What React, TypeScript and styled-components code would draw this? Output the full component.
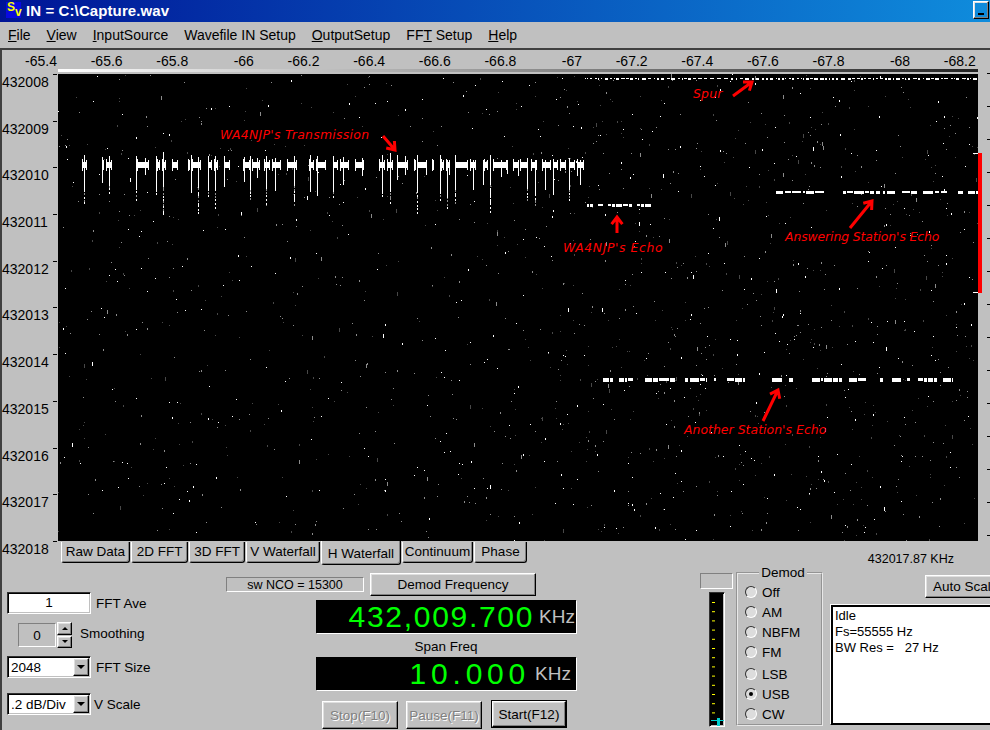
import React from 'react'
import styled, { createGlobalStyle, css } from 'styled-components'

const GlobalStyles = createGlobalStyle`
  html, body {
    margin: 0;
    background: #c0c0c0;
    overflow: hidden;
  }
  * { box-sizing: border-box; }
`

const raised = css`
  border: 1px solid;
  border-color: #fff #000 #000 #fff;
  box-shadow: inset -1px -1px #808080, inset 1px 1px #dfdfdf;
`

const sunken = css`
  border: 1px solid;
  border-color: #303030 #fff #fff #303030;
  box-shadow: inset 1px 1px #000, inset -1px -1px #c0c0c0;
`

const PLOT_W = 920
const PLOT_H = 467

// small seeded generator so the waterfall comes out the same on every load
const makeRandom = (seed: number) => () => {
  seed = (seed + 0x6d2b79f5) | 0
  let t = Math.imul(seed ^ (seed >>> 15), 1 | seed)
  t = (t + Math.imul(t ^ (t >>> 7), 61 | t)) ^ t
  return ((t ^ (t >>> 14)) >>> 0) / 4294967296
}

const buildNoise = () => {
  const rnd = makeRandom(7)
  const paths = ['', '', '']
  for (let i = 0; i < 1900; i++) {
    const x = Math.floor(rnd() * PLOT_W)
    if (x < 500 && rnd() < 0.35) continue
    const y = Math.floor(rnd() * PLOT_H)
    const len = rnd() < 0.75 ? 1 : rnd() < 0.7 ? 2 : 4
    const level = rnd()
    const slot = level < 0.25 ? 0 : level < 0.6 ? 1 : 2
    paths[slot] += `M${x}.5 ${y}v${len}`
  }
  return paths
}

// plot x ranges in page pixels, main transmission keying
const KEY_BLOBS = [
  [82, 87], [102, 104], [106, 112], [137, 149], [157, 160], [162, 166], [172, 178], [188, 190], [192, 201],
  [208, 212], [214, 218], [224, 230], [243, 250], [252, 260], [264, 270], [272, 281], [287, 297], [309, 314],
  [316, 326], [333, 338], [340, 349], [355, 364], [379, 385], [387, 393], [397, 408], [414, 416], [417, 427],
  [432, 434], [441, 444], [446, 450], [455, 468], [470, 476], [484, 488], [493, 507], [513, 519], [520, 528],
  [531, 537], [542, 551], [553, 558], [560, 566], [569, 575], [577, 584],
]

const KEY_TAILS = [
  [84, 155, 205], [102, 157, 183], [109, 156, 195], [136, 156, 200], [145, 158, 175], [156, 156, 195], [163, 152, 215],
  [191, 155, 195], [198, 157, 215], [208, 156, 198], [215, 156, 210], [224, 156, 187], [244, 157, 182], [250, 156, 200],
  [257, 158, 178], [266, 156, 205], [275, 158, 190], [294, 156, 205], [310, 155, 192], [317, 156, 198], [333, 156, 200],
  [343, 157, 185], [362, 158, 176], [382, 155, 196], [390, 153, 205], [397, 155, 180], [405, 156, 175], [417, 155, 215],
  [426, 160, 175], [440, 155, 200], [447, 160, 210], [449, 160, 175], [455, 155, 205], [473, 160, 190], [483, 160, 185],
  [490, 155, 215], [501, 160, 177], [507, 160, 174], [518, 160, 176], [527, 158, 200], [535, 160, 205], [545, 160, 190],
  [553, 160, 195], [569, 158, 200], [577, 160, 176], [580, 160, 185],
]

const ECHO_TRACES = [
  { y: 204, h: 3, runs: [[587, 593], [598, 603], [608, 632], [637, 651]] },
  { y: 191, h: 3, runs: [[776, 825], [843, 880], [883, 895], [902, 917], [923, 947], [958, 963], [968, 978]] },
  { y: 378, h: 4, runs: [[603, 613], [619, 633], [645, 675], [685, 707], [714, 716], [727, 745], [772, 782], [789, 795], [812, 842], [849, 867], [880, 883], [892, 902], [907, 910], [918, 937], [943, 953]] },
  { y: 78, h: 2, runs: [[585, 978]] },
]

const buildSignals = () => {
  const rnd = makeRandom(21)
  let bright = ''
  let dim = ''
  KEY_BLOBS.forEach(([a, b]) => {
    bright += `M${a - 58} ${162 - 74}h${b - a}v6h${a - b}z`
    // keying clicks stick out past both ends of every element
    bright += `M${a - 58} ${159 - 74}h1v12h-1z`
    bright += `M${b - 59} ${160 - 74}h1v10h-1z`
  })
  KEY_TAILS.forEach(([x, top, end]) => {
    const px = x - 58
    const solid = Math.min(end, top + 30 + Math.floor(rnd() * 9))
    bright += `M${px} ${top - 74}h1v${solid - top}h-1z`
    for (let y = solid; y < end; y += 2 + Math.floor(rnd() * 3)) {
      const piece = `M${px} ${y - 74}h1v2h-1z`
      if (rnd() < 0.7) bright += piece
      else dim += piece
    }
  })
  ECHO_TRACES.forEach(({ y, h, runs }) => {
    const thin = h === 2
    runs.forEach(([a, b]) => {
      let x = a
      while (x < b) {
        const w = Math.min(b - x, thin ? 1 + Math.floor(rnd() * 4) : 2 + Math.floor(rnd() * 9))
        const tall = thin ? 1 + Math.floor(rnd() * 2) : h - (rnd() < 0.3 ? 1 : 0)
        bright += `M${x - 58} ${y - 74}h${w}v${tall}h${-w}z`
        x += w + (thin ? 1 + Math.floor(rnd() * 3) : rnd() < 0.7 ? 1 : 2)
      }
    })
  })
  return { bright, dim }
}

const NOISE = buildNoise()
const SIGNALS = buildSignals()

const Window = styled.div`
  width: 990px;
  height: 730px;
  overflow: hidden;
  background: #c0c0c0;
  color: #000;
  font-family: "Liberation Sans", Arial, sans-serif;
  font-size: 14px;
  display: flex;
  flex-direction: column;
`

const TitleBar = styled.div`
  height: 22px;
  flex: none;
  display: flex;
  align-items: flex-start;
  padding: 1px 0 0 6px;
  background: linear-gradient(to right, #001496, #0f8cdc);
  overflow: hidden;
`

const AppIcon = styled.div`
  width: 15px;
  height: 16px;
  margin-top: 1px;
  flex: none;
  display: flex;
  justify-content: space-between;
  padding: 0 1px;
  background: #0a0ae0;
  color: #ffff00;
  font: bold 12px/11px "Liberation Sans", sans-serif;
`

const IconLetter = styled.span<{ $low?: boolean }>`
  margin-top: ${p => (p.$low ? 5 : 0)}px;
`

const TitleText = styled.div`
  width: 952px;
  flex: none;
  padding: 1px 0 0 5px;
  color: #fff;
  font-size: 15px;
  line-height: 18px;
  font-weight: 700;
  letter-spacing: 0.1px;
`

const WinButton = styled.div`
  ${raised}
  width: 16px;
  height: 18px;
  margin-right: 1px;
  flex: none;
  display: flex;
  align-items: flex-end;
  justify-content: center;
  padding-bottom: 3px;
`

const MinGlyph = styled.span`
  width: 6px;
  height: 2px;
  background: #000;
`

const MenuBar = styled.div`
  height: 28px;
  flex: none;
  display: flex;
  gap: 16px;
  padding: 5px 0 0 8px;
  line-height: 16px;
  border-bottom: 2px solid #404040;
`

const MenuItem = styled.span``

const PlotFrame = styled.div`
  display: grid;
  grid-template-columns: 58px ${PLOT_W}px 12px;
  grid-template-rows: 24px ${PLOT_H}px;
  flex: none;
  box-shadow: inset 2px 0 #404040;
`

const RulerArea = styled.div`
  grid-column: 1 / 4;
`

const RulerLabels = styled.div`
  height: 19px;
  display: grid;
  grid-template-columns: 57px repeat(14, 65.64px);
  line-height: 22px;
  text-align: right;
`

const RulerLabel = styled.span``

const ScaleStrip = styled.div`
  width: ${PLOT_W}px;
  height: 3px;
  margin-left: 58px;
  background: linear-gradient(to right, #fff, #222);
`

const YAxis = styled.div`
  padding-left: 2px;
`

const YLabel = styled.div`
  position: relative;
  height: 46.7px;
  line-height: 16px;

  &::after {
    content: '';
    position: absolute;
    right: 1px;
    top: 0;
    width: 4px;
    height: 1px;
    background: #000;
  }
`

const Waterfall = styled.div`
  position: relative;
  background: #000;
`

const PlotSvg = styled.svg`
  display: block;
`

const Annotation = styled.span<{ $x: number; $y: number; $spread: number }>`
  position: absolute;
  left: ${p => p.$x - 58}px;
  top: ${p => p.$y - 74}px;
  color: #ff0000;
  font-family: "DejaVu Sans", sans-serif;
  font-style: italic;
  font-size: 12.4px;
  line-height: 14px;
  letter-spacing: ${p => p.$spread}px;
  white-space: nowrap;
`

const RightRail = styled.div`
  position: relative;
  height: 468px;
  margin-top: -1px;
  padding-top: 80px;
  background: repeating-linear-gradient(to bottom, #000 0 1px, transparent 1px 33px) right top / 3px 100% no-repeat;
`

const RangeBar = styled.div`
  position: relative;
  width: 4px;
  height: 140px;
  background: #ff0000;

  &::before, &::after {
    content: '';
    position: absolute;
    left: -5px;
    width: 5px;
    height: 1px;
    background: #fff;
  }
  &::before { top: 0; }
  &::after { bottom: 0; }
`

const TabRow = styled.div`
  height: 22px;
  flex: none;
  display: flex;
  padding-left: 61px;
  box-shadow: inset 2px 0 #404040;
`

const Tab = styled.div<{ $w: number; $active?: boolean }>`
  width: ${p => p.$w}px;
  height: ${p => (p.$active ? 24 : 21)}px;
  margin-top: ${p => (p.$active ? 0 : 1)}px;
  margin-right: 1px;
  flex: none;
  text-align: center;
  line-height: ${p => (p.$active ? 25 : 19)}px;
  border: 1px solid;
  border-top: none;
  border-color: #fff #000 #000 #fff;
  border-radius: 0 0 3px 3px;
  box-shadow: inset -1px -1px #808080;
  font-size: 13.5px;
`

const CursorReadout = styled.div`
  margin-left: auto;
  margin-right: 36px;
  padding-top: 11px;
  font-size: 12.5px;
  line-height: 14px;
`

const ControlPanel = styled.div`
  flex: 1;
  display: flex;
  min-height: 0;
  box-shadow: inset 2px 0 #404040;
`

const FormColumn = styled.div`
  width: 226px;
  flex: none;
  padding: 29px 0 0 7px;
  display: flex;
  flex-direction: column;
`

const FormRow = styled.div<{ $top?: number; $indent?: number; $gap: number }>`
  display: flex;
  align-items: center;
  gap: ${p => p.$gap}px;
  margin-top: ${p => p.$top ?? 0}px;
  margin-left: ${p => p.$indent ?? 0}px;
  font-size: 13.5px;
`

const NumberBox = styled.div`
  ${sunken}
  width: 84px;
  height: 22px;
  background: #fff;
  text-align: center;
  line-height: 19px;
`

const Spinner = styled.div`
  display: flex;
  align-items: center;
  gap: 1px;
`

const SpinValue = styled.div`
  width: 38px;
  height: 24px;
  border: 1px solid;
  border-color: #808080 #fff #fff #808080;
  text-align: center;
  line-height: 23px;
`

const SpinButtons = styled.div`
  display: flex;
  flex-direction: column;
  gap: 1px;
`

const SpinButton = styled.div`
  ${raised}
  width: 15px;
  height: 12.5px;
  display: flex;
  align-items: center;
  justify-content: center;
`

const SpinLabel = styled.span`
  margin-bottom: 4px;
`

const Arrow = styled.span<{ $up?: boolean; $size: number }>`
  width: 0;
  height: 0;
  border-left: ${p => p.$size}px solid transparent;
  border-right: ${p => p.$size}px solid transparent;
  ${p => (p.$up ? `border-bottom: ${p.$size}px solid #000;` : `border-top: ${p.$size}px solid #000;`)}
`

const Combo = styled.div`
  ${sunken}
  width: 84px;
  height: 22px;
  background: #fff;
  display: flex;
  align-items: center;
  justify-content: space-between;
  padding: 1px 1px 1px 3px;
  white-space: nowrap;
  overflow: hidden;
`

const ComboButton = styled.div`
  ${raised}
  width: 16px;
  height: 18px;
  flex: none;
  background: #c0c0c0;
  display: flex;
  align-items: center;
  justify-content: center;
`

const CenterColumn = styled.div`
  width: 350px;
  flex: none;
  padding-top: 10px;
  display: flex;
  flex-direction: column;
`

const NcoRow = styled.div`
  display: flex;
  align-items: flex-start;
  gap: 6px;
`

const NcoBox = styled.div`
  width: 138px;
  height: 15px;
  margin-top: 4px;
  border: 1px solid;
  border-color: #808080 #fff #fff #808080;
  text-align: center;
  font-size: 12.5px;
  line-height: 14px;
`

const PanelButton = styled.div<{ $w: number; $h: number; $disabled?: boolean; $default?: boolean }>`
  ${raised}
  width: ${p => p.$w}px;
  height: ${p => p.$h}px;
  flex: none;
  display: flex;
  align-items: center;
  justify-content: center;
  font-size: 13.5px;
  white-space: nowrap;
  ${p => p.$disabled && 'color: #808080; text-shadow: 1px 1px #fff;'}
  ${p => p.$default && 'outline: 1px solid #000; margin-left: 2px;'}
`

const Display = styled.div<{ $top: number; $pad: number; $spread: number }>`
  width: 260px;
  height: 33px;
  margin: ${p => p.$top}px 0 0 90px;
  padding-right: ${p => p.$pad}px;
  background: #000;
  box-shadow: 1px 1px #fff;
  display: flex;
  align-items: center;
  justify-content: flex-end;
  gap: 5px;
  --spread: ${p => p.$spread}px;
`

const DisplayValue = styled.span`
  color: #00ff00;
  font-size: 30px;
  line-height: 33px;
  letter-spacing: var(--spread);
  white-space: nowrap;
`

const DisplayUnit = styled.span`
  color: #c0c0c0;
  font-size: 19px;
`

const SpanLabel = styled.div`
  width: 260px;
  margin-left: 90px;
  height: 24px;
  text-align: center;
  font-size: 13.5px;
  line-height: 28px;
`

const RunRow = styled.div`
  display: flex;
  gap: 8px;
  margin: 11px 0 0 96px;
`

const MeterColumn = styled.div`
  width: 33px;
  margin-left: 124px;
  flex: none;
  padding-top: 10px;
`

const MeterCaption = styled.div`
  height: 16px;
  border: 1px solid;
  border-color: #808080 #fff #fff #808080;
`

const MeterBar = styled.div`
  ${sunken}
  width: 16px;
  height: 135px;
  margin: 3px 0 0 9px;
  background: #000;
`

const MeterSvg = styled.svg`
  display: block;
`

const DemodGroup = styled.fieldset`
  width: 87px;
  height: 161px;
  margin: 2px 0 0 3px;
  padding: 1px 0 0 7px;
  flex: none;
  border: 2px groove #e8e8e8;
  min-width: 0;
`

const DemodLegend = styled.legend`
  margin: 0 auto;
  padding: 0 2px;
  font-size: 13.5px;
  line-height: 16px;
`

const RadioRow = styled.div<{ $top?: number }>`
  height: 20px;
  margin-top: ${p => p.$top ?? 0}px;
  display: flex;
  align-items: center;
  gap: 5px;
  font-size: 13.5px;
`

const RadioDot = styled.span<{ $on?: boolean }>`
  width: 12px;
  height: 12px;
  border-radius: 50%;
  border: 1px solid;
  border-color: #303030 #fff #fff #303030;
  background: #dcdcdc;
  display: flex;
  align-items: center;
  justify-content: center;

  &::after {
    content: '';
    width: 4px;
    height: 4px;
    border-radius: 50%;
    background: ${p => (p.$on ? '#000' : 'transparent')};
  }
`

const StatusColumn = styled.div`
  width: 160px;
  margin-left: 7px;
  flex: none;
  padding-top: 12px;
`

const AutoScale = styled(PanelButton)`
  margin-left: 95px;
  justify-content: flex-start;
  padding-left: 7px;
`

const StatusBox = styled.div`
  width: 180px;
  height: 121px;
  margin-top: 6px;
  padding: 3px 0 0 4px;
  background: #fff;
  border: 1px solid;
  border-color: #fff #000 #000 #fff;
  box-shadow: inset 2px 2px #000, inset 0 -1px #000;
  font-size: 13px;
  line-height: 16px;
  white-space: pre;
`

const Y_LABELS = ['432008', '432009', '432010', '432011', '432012', '432013', '432014', '432015', '432016', '432017', '432018']

const X_LABELS = ['-65.4', '-65.6', '-65.8', '-66', '-66.2', '-66.4', '-66.6', '-66.8', '-67', '-67.2', '-67.4', '-67.6', '-67.8', '-68', '-68.2']

const TABS = [
  { label: 'Raw Data', w: 69 },
  { label: '2D FFT', w: 57 },
  { label: '3D FFT', w: 56 },
  { label: 'V Waterfall', w: 74 },
  { label: 'H Waterfall', w: 80, active: true },
  { label: 'Continuum', w: 71 },
  { label: 'Phase', w: 53 },
]

const NOTES = [
  { text: "WA4NJP's Transmission", x: 220, y: 128, spread: 0.3 },
  { text: 'Spur', x: 693, y: 87, spread: 0.2 },
  { text: "WA4NJP's Echo", x: 563, y: 241, spread: 0.6 },
  { text: "Answering Station's Echo", x: 785, y: 230, spread: -0.1 },
  { text: "Another Station's Echo", x: 684, y: 423, spread: 0.05 },
]

// tail x, tail y, head x, head y, in page pixels
const ARROWS = [
  [733, 96, 752, 82],
  [383, 136, 395, 150],
  [617, 233, 617, 217],
  [850, 228, 872, 201],
  [763, 421, 778, 390],
]

const DEMOD_MODES = ['Off', 'AM', 'NBFM', 'FM', 'LSB', 'USB', 'CW']

const arrowPath = ([x1, y1, x2, y2]: number[]) => {
  const a = Math.atan2(y2 - y1, x2 - x1)
  const hx = x2 - 58
  const hy = y2 - 74
  const wing = (d: number) => `${hx + 9 * Math.cos(a + d)} ${hy + 9 * Math.sin(a + d)}`
  return `M${x1 - 58} ${y1 - 74}L${hx} ${hy}M${wing(2.5)}L${hx} ${hy}L${wing(-2.5)}`
}

const ComboBox = ({ value }: { value: string }) => (
  <Combo>
    {value}
    <ComboButton>
      <Arrow $size={4} />
    </ComboButton>
  </Combo>
)

const MeterDrawing = () => (
  <MeterSvg width={14} height={133} viewBox="0 0 14 133">
    {Array.from({ length: 13 }, (_, i) => (
      <rect key={i} x={2} y={9 + i * 9.2} width={3} height={1} fill="#ffff00" />
    ))}
    <rect x={1} y={127} width={13} height={1} fill="#00d0d0" />
    <rect x={7} y={125} width={3} height={8} fill="#00d0d0" />
  </MeterSvg>
)

const App = () => (
  <>
    <GlobalStyles />
    <Window>
      <TitleBar>
        <AppIcon>
          <IconLetter>S</IconLetter>
          <IconLetter $low>v</IconLetter>
        </AppIcon>
        <TitleText>IN = C:\Capture.wav</TitleText>
        <WinButton>
          <MinGlyph />
        </WinButton>
        <WinButton />
      </TitleBar>

      <MenuBar>
        <MenuItem><u>F</u>ile</MenuItem>
        <MenuItem><u>V</u>iew</MenuItem>
        <MenuItem><u>I</u>nputSource</MenuItem>
        <MenuItem>Wavefile IN Setup</MenuItem>
        <MenuItem><u>O</u>utputSetup</MenuItem>
        <MenuItem>FF<u>T</u> Setup</MenuItem>
        <MenuItem><u>H</u>elp</MenuItem>
      </MenuBar>

      <PlotFrame>
        <RulerArea>
          <RulerLabels>
            {X_LABELS.map(label => (
              <RulerLabel key={label}>{label}</RulerLabel>
            ))}
          </RulerLabels>
          <ScaleStrip />
        </RulerArea>

        <YAxis>
          {Y_LABELS.map(label => (
            <YLabel key={label}>{label}</YLabel>
          ))}
        </YAxis>

        <Waterfall>
          <PlotSvg width={PLOT_W} height={PLOT_H} viewBox={`0 0 ${PLOT_W} ${PLOT_H}`} shapeRendering="crispEdges">
            <path d={NOISE[0]} stroke="#fff" fill="none" />
            <path d={NOISE[1]} stroke="#8c8c8c" fill="none" />
            <path d={NOISE[2]} stroke="#484848" fill="none" />
            <path d={SIGNALS.dim} fill="#909090" />
            <path d={SIGNALS.bright} fill="#fff" />
            {ARROWS.map(arrow => (
              <path
                key={arrow.join()}
                d={arrowPath(arrow)}
                stroke="#ff0000"
                strokeWidth={3}
                fill="none"
                shapeRendering="auto"
              />
            ))}
          </PlotSvg>
          {NOTES.map(note => (
            <Annotation key={note.text} $x={note.x} $y={note.y} $spread={note.spread}>
              {note.text}
            </Annotation>
          ))}
        </Waterfall>

        <RightRail>
          <RangeBar />
        </RightRail>
      </PlotFrame>

      <TabRow>
        {TABS.map(tab => (
          <Tab key={tab.label} $w={tab.w} $active={tab.active}>
            {tab.label}
          </Tab>
        ))}
        <CursorReadout>432017.87 KHz</CursorReadout>
      </TabRow>

      <ControlPanel>
        <FormColumn>
          <FormRow $gap={5}>
            <NumberBox>1</NumberBox>
            FFT Ave
          </FormRow>
          <FormRow $top={8} $indent={11} $gap={8}>
            <Spinner>
              <SpinValue>0</SpinValue>
              <SpinButtons>
                <SpinButton><Arrow $up $size={3} /></SpinButton>
                <SpinButton><Arrow $size={3} /></SpinButton>
              </SpinButtons>
            </Spinner>
            <SpinLabel>Smoothing</SpinLabel>
          </FormRow>
          <FormRow $top={8} $gap={5}>
            <ComboBox value="2048" />
            FFT Size
          </FormRow>
          <FormRow $top={15} $gap={3}>
            <ComboBox value=".2 dB/Div" />
            V Scale
          </FormRow>
        </FormColumn>

        <CenterColumn>
          <NcoRow>
            <NcoBox>sw NCO = 15300</NcoBox>
            <PanelButton $w={166} $h={23}>Demod Frequency</PanelButton>
          </NcoRow>
          <Display $top={4} $pad={1} $spread={1.7}>
            <DisplayValue>432,009.700</DisplayValue>
            <DisplayUnit>KHz</DisplayUnit>
          </Display>
          <SpanLabel>Span Freq</SpanLabel>
          <Display $top={0} $pad={5} $spread={4.8}>
            <DisplayValue>10.000</DisplayValue>
            <DisplayUnit>KHz</DisplayUnit>
          </Display>
          <RunRow>
            <PanelButton $w={76} $h={28} $disabled>Stop(F10)</PanelButton>
            <PanelButton $w={76} $h={28} $disabled>Pause(F11)</PanelButton>
            <PanelButton $w={74} $h={26} $default>Start(F12)</PanelButton>
          </RunRow>
        </CenterColumn>

        <MeterColumn>
          <MeterCaption />
          <MeterBar>
            <MeterDrawing />
          </MeterBar>
        </MeterColumn>

        <DemodGroup>
          <DemodLegend>Demod</DemodLegend>
          {DEMOD_MODES.map(mode => (
            <RadioRow key={mode} $top={mode === 'LSB' ? 2 : 0}>
              <RadioDot $on={mode === 'USB'} />
              {mode}
            </RadioRow>
          ))}
        </DemodGroup>

        <StatusColumn>
          <AutoScale $w={80} $h={23}>Auto Scale</AutoScale>
          <StatusBox>{'Idle\nFs=55555 Hz\nBW Res =   27 Hz'}</StatusBox>
        </StatusColumn>
      </ControlPanel>
    </Window>
  </>
)

export default App
